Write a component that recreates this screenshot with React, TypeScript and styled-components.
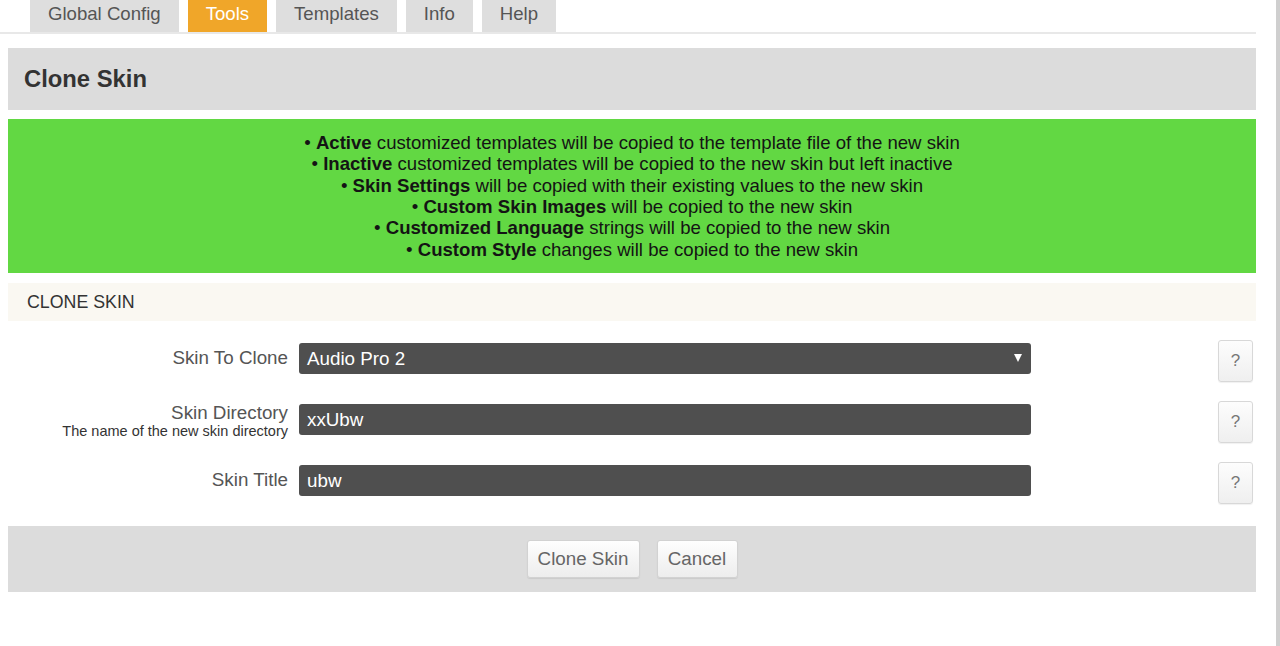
import React from "react";
import styled, { createGlobalStyle } from "styled-components";

const Global = createGlobalStyle`
  html, body { margin: 0; padding: 0; background: #fff; }
  body { font-family: "Liberation Sans", Arial, sans-serif; }
  * { box-sizing: border-box; }
`;

const Page = styled.div`
  width: 1280px;
  height: 646px;
  overflow: hidden;
  border-right: 4px solid #cfcfcf;
  padding: 0 20px 0 8px;
`;

const TabBar = styled.div`
  display: flex;
  gap: 9px;
  padding-left: 30px;
  margin-left: -8px;
  border-bottom: 2px solid #e8e8e8;
  height: 34px;
`;

const Tab = styled.div<{ $active?: boolean }>`
  height: 32px;
  padding: 0 18px 4px;
  display: flex;
  align-items: center;
  font-size: 18.6px;
  color: ${(p) => (p.$active ? "#fff" : "#555")};
  background: ${(p) => (p.$active ? "#f0a629" : "#dedede")};
`;

const TitlePanel = styled.div`
  margin-top: 14px;
  height: 62px;
  background: #dcdcdc;
  display: flex;
  align-items: center;
  padding-left: 16px;
  font-size: 23.8px;
  font-weight: bold;
  color: #333;
`;

const Notice = styled.div`
  margin-top: 9px;
  height: 154px;
  background: #62d843;
  display: flex;
  flex-direction: column;
  align-items: center;
  justify-content: center;
  font-size: 18.6px;
  line-height: 21.3px;
  color: #141414;
`;

const NoticeLine = styled.div`
  white-space: nowrap;
  b { font-weight: bold; }
`;

const SectionHeader = styled.div`
  margin-top: 10px;
  height: 38px;
  background: #faf8f2;
  display: flex;
  align-items: center;
  padding-left: 19px;
  font-size: 17.8px;
  color: #333;
  text-transform: uppercase;
`;

const Form = styled.div`
  padding: 19px 3px 20px 0;
  display: flex;
  flex-direction: column;
  gap: 19px;
`;

const Row = styled.div`
  display: grid;
  grid-template-columns: 280px 732px 1fr 35px;
  column-gap: 11px;
  align-items: start;
  height: 42px;
`;

const LabelBox = styled.div<{ $stacked?: boolean }>`
  text-align: right;
  color: #555;
  font-size: 18.8px;
  line-height: 20px;
  margin-top: ${(p) => (p.$stacked ? "2px" : "8px")};
`;

const SubLabel = styled.div`
  font-size: 14.5px;
  line-height: 16px;
  color: #333;
`;

const Field = styled.div`
  margin-top: 3px;
  height: 31px;
  background: #4f4f4f;
  border-radius: 3px;
  color: #fff;
  font-size: 18.8px;
  display: flex;
  align-items: center;
  justify-content: space-between;
  padding: 0 9px 0 8px;
`;

const Caret = styled.span`
  width: 0;
  height: 0;
  border-left: 4px solid transparent;
  border-right: 4px solid transparent;
  border-top: 8px solid #fff;
  margin-top: -2px;
`;

const HelpButton = styled.div`
  width: 35px;
  height: 42px;
  border: 1px solid #d8d8d8;
  border-radius: 3px;
  background: linear-gradient(#fdfdfd, #efefef);
  box-shadow: 0 1px 1px rgba(0, 0, 0, 0.06);
  display: flex;
  align-items: center;
  justify-content: center;
  color: #777;
  font-size: 17px;
`;

const Footer = styled.div`
  margin-top: 2px;
  height: 66px;
  background: #dcdcdc;
  display: flex;
  align-items: center;
  justify-content: center;
  gap: 17px;
`;

const Button = styled.div<{ $w: number }>`
  width: ${(p) => p.$w}px;
  height: 38px;
  border: 1px solid #d2d2d2;
  border-radius: 3px;
  background: linear-gradient(#fefefe, #ededed);
  box-shadow: 0 1px 1px rgba(0, 0, 0, 0.08);
  display: flex;
  align-items: center;
  justify-content: center;
  font-size: 18.8px;
  color: #666;
`;

const tabs = ["Global Config", "Tools", "Templates", "Info", "Help"];

const notes: [string, string][] = [
  ["Active", " customized templates will be copied to the template file of the new skin"],
  ["Inactive", " customized templates will be copied to the new skin but left inactive"],
  ["Skin Settings", " will be copied with their existing values to the new skin"],
  ["Custom Skin Images", " will be copied to the new skin"],
  ["Customized Language", " strings will be copied to the new skin"],
  ["Custom Style", " changes will be copied to the new skin"],
];

export default function App() {
  return (
    <>
      <Global />
      <Page>
        <TabBar>
          {tabs.map((t) => (
            <Tab key={t} $active={t === "Tools"}>
              {t}
            </Tab>
          ))}
        </TabBar>
        <TitlePanel>Clone Skin</TitlePanel>
        <Notice>
          {notes.map(([b, rest]) => (
            <NoticeLine key={b}>
              • <b>{b}</b>
              {rest}
            </NoticeLine>
          ))}
        </Notice>
        <SectionHeader>Clone Skin</SectionHeader>
        <Form>
          <Row>
            <LabelBox>Skin To Clone</LabelBox>
            <Field>
              <span>Audio Pro 2</span>
              <Caret />
            </Field>
            <span />
            <HelpButton>?</HelpButton>
          </Row>
          <Row>
            <LabelBox $stacked>
              Skin Directory
              <SubLabel>The name of the new skin directory</SubLabel>
            </LabelBox>
            <Field>
              <span>xxUbw</span>
            </Field>
            <span />
            <HelpButton>?</HelpButton>
          </Row>
          <Row>
            <LabelBox>Skin Title</LabelBox>
            <Field>
              <span>ubw</span>
            </Field>
            <span />
            <HelpButton>?</HelpButton>
          </Row>
        </Form>
        <Footer>
          <Button $w={113}>Clone Skin</Button>
          <Button $w={81}>Cancel</Button>
        </Footer>
      </Page>
    </>
  );
}
